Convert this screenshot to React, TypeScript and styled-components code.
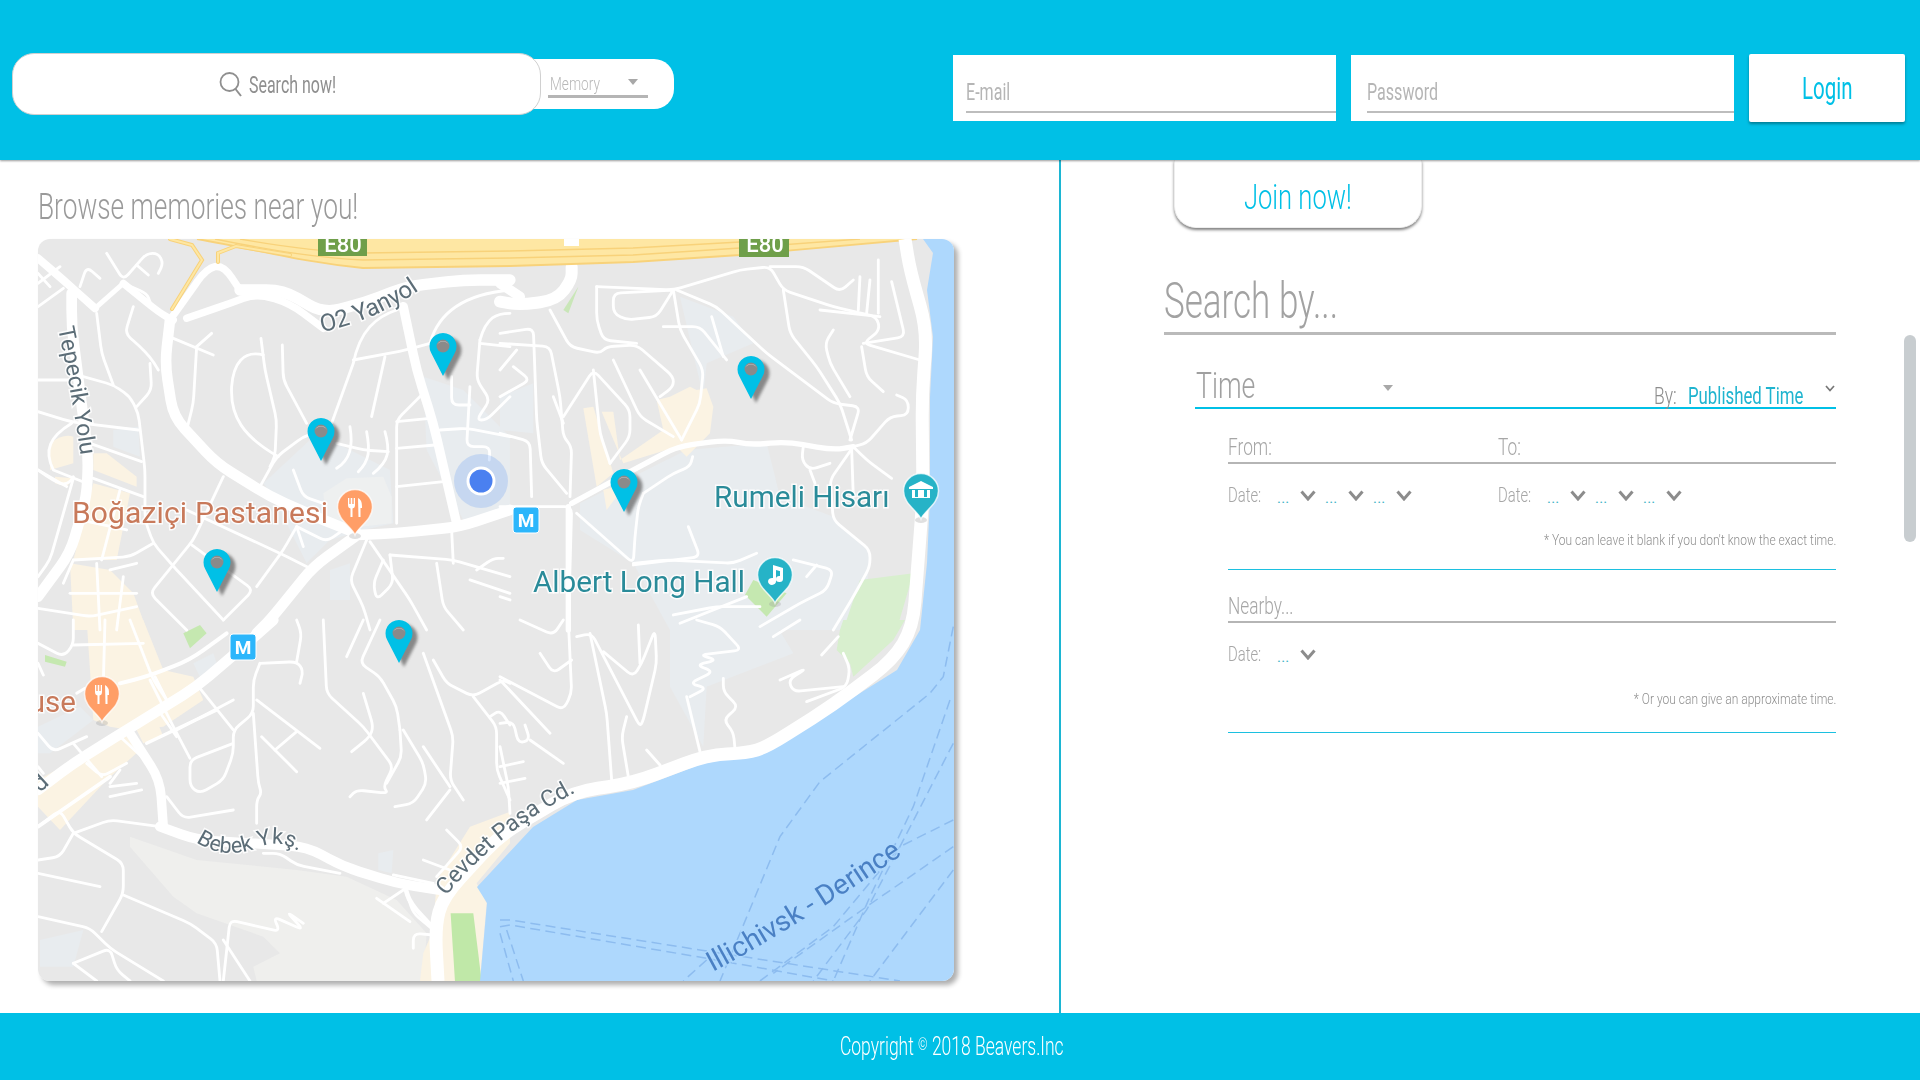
import React from 'react';
import styled, { createGlobalStyle, css } from 'styled-components';

const CYAN = '#00c0e6';

const Global = createGlobalStyle`
  html, body { margin: 0; padding: 0; background: #fff; overflow: hidden; }
  body { font-family: Roboto, "Open Sans", sans-serif; font-weight: 300; }
`;

const squeeze = (k: number, origin = 'left') => css`
  display: inline-block;
  white-space: nowrap;
  transform: scaleX(${k});
  transform-origin: ${origin} center;
`;

const Page = styled.div`
  width: 1920px;
  height: 1080px;
  display: flex;
  flex-direction: column;
  position: relative;
  overflow: hidden;
`;

/* ---------- header ---------- */
const Header = styled.header`
  height: 160px;
  flex: none;
  background: ${CYAN};
  box-shadow: 0 1px 2px rgba(0, 0, 0, 0.4);
  position: relative;
  z-index: 3;
  display: flex;
  align-items: flex-start;
  padding: 0 15px 0 12px;
`;
const SearchBox = styled.div`
  width: 529px;
  height: 62px;
  margin-top: 53px;
  box-sizing: border-box;
  background: #fff;
  border: 1px solid #d0d0d0;
  border-radius: 22px;
  position: relative;
  z-index: 1;
  display: flex;
  align-items: center;
  justify-content: center;
  gap: 5px;
  padding-right: 25px;
  color: #8c8c8c;
`;
const SearchText = styled.span`
  ${squeeze(0.665)}
  width: 62px;
  margin-top: 2px;
  font-size: 24px;
  font-weight: 400;
  color: #8f8f8f;
`;
const TypePill = styled.div`
  width: 140px;
  height: 50px;
  margin: 59px 0 0 -7px;
  background: #fff;
  border-radius: 0 20px 20px 0;
  padding: 0 0 0 14px;
  box-sizing: border-box;
`;
const TypeSelect = styled.div`
  width: 100px;
  height: 39px;
  border-bottom: 3px solid #b5b5b5;
  display: flex;
  align-items: flex-end;
  justify-content: space-between;
  padding: 0 10px 0 2px;
  box-sizing: border-box;
  position: relative;
`;
const TypeText = styled.span`
  ${squeeze(0.72)}
  font-size: 19px;
  color: #b8b8b8;
  width: 40px;
`;
const Caret = styled.i<{ $top: number; $left?: number }>`
  position: absolute;
  ${p => (p.$left !== undefined ? `left: ${p.$left}px;` : 'right: 10px;')}
  top: ${p => p.$top}px;
  width: 0;
  height: 0;
  border-left: 5px solid transparent;
  border-right: 5px solid transparent;
  border-top: 6px solid #a8a8a8;
`;
const LoginArea = styled.div`
  margin-left: auto;
  display: flex;
  gap: 15px;
  align-items: flex-start;
  margin-top: 54px;
`;
const Field = styled.div<{ $pad: number }>`
  width: 383px;
  height: 66px;
  margin-top: 1px;
  background: #fff;
  padding-left: ${p => p.$pad}px;
  box-sizing: border-box;
`;
const FieldInner = styled.div`
  height: 58px;
  border-bottom: 2px solid #bdbdbd;
  box-sizing: border-box;
  display: flex;
  align-items: flex-end;
  padding: 0 0 5px 0;
`;
const FieldText = styled.span`
  ${squeeze(0.67)}
  font-size: 24px;
  color: #b5b5b5;
  font-weight: 400;
`;
const LoginButton = styled.button`
  width: 156px;
  height: 68px;
  border: 0;
  background: #fff;
  border-radius: 2px;
  box-shadow: 0 2px 3px rgba(0, 0, 0, 0.35);
  font: 400 31px Roboto, sans-serif;
  color: ${CYAN};
  padding: 0;
  span { ${squeeze(0.66, 'center')} }
`;

/* ---------- main ---------- */
const Main = styled.main`
  flex: 1;
  display: flex;
  min-height: 0;
`;
const LeftPanel = styled.section`
  width: 1059px;
  flex: none;
  padding: 0 0 0 38px;
  box-sizing: border-box;
`;
const Divider = styled.div`
  width: 2px;
  flex: none;
  background: #1cb6d3;
`;
const Browse = styled.h2`
  margin: 0;
  height: 79px;
  padding-top: 25px;
  box-sizing: border-box;
  font-size: 37px;
  line-height: 44px;
  font-weight: 300;
  color: #9a9a9a;
  span { ${squeeze(0.71)} }
`;
const MapFrame = styled.div`
  width: 916px;
  height: 742px;
  border-radius: 12px;
  overflow: hidden;
  box-shadow: 4px 4px 5px rgba(0, 0, 0, 0.32);
  svg { display: block; filter: blur(0.45px); }
`;
const RightPanel = styled.section`
  flex: 1;
  padding: 0 84px 0 103px;
  box-sizing: border-box;
  position: relative;
`;
const JoinButton = styled.button`
  display: block;
  width: 248px;
  height: 68px;
  margin-left: 10px;
  border: 1px solid #eee;
  border-top: 0;
  background: #fff;
  border-radius: 0 0 22px 22px;
  box-shadow: 0 2px 3px rgba(0, 0, 0, 0.5);
  color: ${CYAN};
  font: 300 35px Roboto, sans-serif;
  padding: 8px 0 0;
  span { ${squeeze(0.73, 'center')} }
`;
const SearchBy = styled.h1`
  margin: 0;
  height: 107px;
  box-sizing: border-box;
  border-bottom: 3px solid #bababa;
  display: flex;
  align-items: flex-end;
  font-size: 50px;
  line-height: 60px;
  font-weight: 300;
  color: #a2a2a2;
  padding-bottom: 1px;
  span { ${squeeze(0.7)} }
`;
const TimeHead = styled.div`
  margin-left: 31px;
  height: 74px;
  box-sizing: border-box;
  border-bottom: 2px solid ${CYAN};
  position: relative;
  display: flex;
  align-items: flex-start;
`;
const TimeLabel = styled.span`
  ${squeeze(0.72)}
  font-size: 37px;
  line-height: 44px;
  margin: 29px 0 0 1px;
  color: #a0a0a0;
`;
const SortBy = styled.div`
  position: absolute;
  left: 459px;
  top: 47px;
  display: flex;
  align-items: center;
  height: 28px;
`;
const ByLabel = styled.span`
  ${squeeze(0.76)}
  font-size: 23px;
  width: 34px;
  color: #8c8c8c;
`;
const ByValue = styled.span`
  ${squeeze(0.7)}
  font-size: 24px;
  font-weight: 400;
  color: #1fb4cf;
`;
const SortChevron = styled.svg`
  position: absolute;
  right: 1px;
  top: 50px;
`;
const Sub = styled.div`
  margin-left: 64px;
`;
const TwoCols = styled.div`
  display: grid;
  grid-template-columns: 270px 1fr;
`;
const SubHead = styled.div<{ $h: number }>`
  height: ${p => p.$h}px;
  box-sizing: border-box;
  border-bottom: 2px solid #b5b5b5;
  display: flex;
  align-items: flex-end;
  padding-bottom: 0;
  font-size: 24px;
  line-height: 30px;
  color: #a6a6a6;
  span { ${squeeze(0.72)} }
`;
const DateRow = styled.div`
  height: 62px;
  display: flex;
  align-items: center;
`;
const DateLabel = styled.span`
  width: 49px;
  font-size: 20px;
  color: #a6a6a6;
  b { font-weight: 300; ${squeeze(0.74)} }
`;
const Stepper = styled.span`
  width: 48px;
  display: flex;
  align-items: center;
  gap: 12px;
`;
const Dots = styled.span`
  width: 11px;
  font-size: 15px;
  font-weight: 400;
  color: #3db2c6;
  margin-top: 6px;
  letter-spacing: 0.2px;
  line-height: 1;
`;
const Note = styled.p<{ $h: number }>`
  margin: 0;
  height: ${p => p.$h}px;
  box-sizing: border-box;
  border-bottom: 1.5px solid #1cc0e0;
  text-align: right;
  line-height: 28px;
  font-size: 15.5px;
  font-weight: 300;
  color: #8f8f8f;
  span { ${squeeze(0.775, 'right')} }
`;
const Thumb = styled.div`
  position: absolute;
  right: 4px;
  top: 175px;
  width: 12px;
  height: 207px;
  border-radius: 6px;
  background: #c8cdd0;
`;
const Footer = styled.footer`
  height: 67px;
  flex: none;
  background: ${CYAN};
  display: flex;
  align-items: center;
  justify-content: center;
  padding-right: 17px;
  color: #fff;
  font-size: 25px;
  font-weight: 300;
  span { ${squeeze(0.7, 'center')} }
  sup { font-size: 17px; vertical-align: 5px; line-height: 0; }
`;

/* ---------- map ---------- */
const MapText = styled.text<{ $c: string; $s: number; $w?: number }>`
  font-family: Roboto, sans-serif;
  font-size: ${p => p.$s}px;
  font-weight: ${p => p.$w ?? 400};
  fill: ${p => p.$c};
  stroke: rgba(255, 255, 255, 0.85);
  stroke-width: 3px;
  paint-order: stroke;
`;

/* round the corners of a polyline, as the streets of the map have them */
const rounded = (d: string, r: number) => {
  if (/[CQA]/.test(d)) return d;
  const pts = d.replace(/[MLZ]/g, ' ').trim().split(/\s+/).map(s => s.split(',').map(Number));
  if (pts.length < 3) return d;
  let out = `M${pts[0][0]},${pts[0][1]}`;
  for (let i = 1; i < pts.length - 1; i++) {
    const [ax, ay] = pts[i - 1];
    const [bx, by] = pts[i];
    const [cx, cy] = pts[i + 1];
    const la = Math.hypot(ax - bx, ay - by);
    const lc = Math.hypot(cx - bx, cy - by);
    const ra = Math.min(r, la / 2);
    const rc = Math.min(r, lc / 2);
    out += ` L${bx + ((ax - bx) * ra) / la},${by + ((ay - by) * ra) / la}`;
    out += ` Q${bx},${by} ${bx + ((cx - bx) * rc) / lc},${by + ((cy - by) * rc) / lc}`;
  }
  const e = pts[pts.length - 1];
  return out + ` L${e[0]},${e[1]}`;
};

const BEIGE = '#fbf3e3';
const CAMPUS = '#e8ecef';

const Z4F: [string, string][] = [
  [CAMPUS, 'M700,760 L850,620 L920,640 L1080,720 L1090,880 L1000,900 L900,930 L830,1000 L730,800Z'],
  ['#eef0f0', 'M880,790 L950,745 L1060,740 L1085,800 L1085,880 L990,890 L890,880Z'],
  [CAMPUS, 'M1180,440 L1300,480 L1440,620 L1440,840 L1300,870 L1190,660Z'],
  [CAMPUS, 'M250,600 L325,590 L330,680 L250,650Z'],
  [CAMPUS, 'M900,1020 L960,1000 L960,1110 L900,1110Z'],
  [BEIGE, 'M60,640 Q100,610 130,620 L130,700 L60,720Z'],
  [BEIGE, 'M190,670 L230,670 L320,740 L320,770 L190,720Z'],
  [BEIGE, 'M75,740 L130,745 L110,770 L75,760Z'],
  [BEIGE, 'M190,760 L300,790 L260,990 L130,990Z'],
  [BEIGE, 'M120,1000 L240,1020 L310,1090 L350,1200 L130,1200Z'],
];
const Z4T = [
  'M230,70 L280,150 L350,70 L385,70 L400,100 L385,130', 'M150,170 L170,110 L210,145', 'M320,105 L355,135', 'M280,160 L350,190 L360,215',
  'M310,230 L285,310 L330,350 L360,380 L385,420', 'M360,400 L365,480 L320,530', 'M200,250 L215,370 L250,465', 'M125,430 L250,465 L300,500 L325,550 L345,720 L345,870 L370,940 L440,1020 L580,1170',
  'M24,450 L120,450', 'M24,545 L120,575 L325,600', 'M180,640 L335,695', 'M24,720 L110,770', 'M125,580 C60,620 40,660 70,720 L170,760',
  'M430,325 L550,375', 'M500,350 L490,520 L470,600', 'M545,310 L500,350', 'M693,325 L705,420 L740,570 L735,680 L720,710',
  'M700,375 C640,360 610,400 605,470 C600,560 640,620 745,680', 'M757,345 L760,450 L830,580', 'M970,390 L1130,360 L1200,340',
  'M1100,240 C1040,260 990,300 970,400 L905,580', 'M1065,380 L1025,560', 'M1200,340 C1230,230 1330,190 1440,180', 'M1350,330 C1370,260 1400,250 1440,250',
  'M1350,340 L1440,350', 'M1350,330 L1340,450 L1380,510 L1340,570 L1370,570 L1440,500', 'M1320,470 L1310,650 L1380,650 L1378,690', 'M1265,440 L1265,525 L1320,525',
  'M1180,490 L1100,570 L1100,880', 'M1100,575 L1200,565', 'M1100,655 L1215,645', 'M1100,770 L1240,755', 'M1230,600 L1310,595 L1440,620',
  'M910,590 L820,620 L740,680 L690,770', 'M920,640 L1000,660 L1075,665', 'M960,590 C970,650 960,690 920,715', 'M1010,605 C1020,660 1020,690 985,725', 'M1065,605 C1080,660 1080,690 1030,730',
  'M580,740 L490,930 L360,1090 L470,1200', 'M470,840 L750,970 L850,1020', 'M485,945 L670,1080 L580,1170', 'M790,720 L820,800 L880,820',
  'M800,890 L760,960 L680,1070', 'M800,890 L820,950', 'M800,890 L890,935 L940,900', 'M370,940 L300,980 L130,990', 'M130,990 L100,1060',
  'M1020,935 L1140,1110 L1190,1200', 'M1010,930 L960,1050 L1000,1130 L1020,1200', 'M1080,975 L1270,990 L1440,1040', 'M1265,900 L1270,1000',
  'M1220,1000 L1240,1130 L1300,1200', 'M1320,1050 L1440,1090', 'M1340,1020 L1390,985 L1420,985', 'M1060,990 L1030,1060 L1040,1110 L1090,1060 L1080,975', 'M24,1135 L180,1160 L320,1130', 'M200,1000 L210,1200',
  'M24,160 L90,110', 'M24,230 L100,175', 'M24,130 L60,170', 'M24,720 C80,760 110,780 130,740', 'M130,745 L60,990 L24,1040',
  'M190,745 L340,800', 'M270,780 L215,990', 'M150,870 L290,900', 'M320,1090 L120,1090', 'M280,1040 L260,1200', 'M240,1020 L320,1000',
];
const Z4H: [string, number][] = [
  ['M24,85 L100,150 L195,235', 24], ['M195,235 L280,160', 15], ['M280,160 L390,250 L430,270', 22],
  ['M420,270 L470,200 L530,115 L580,105 L630,180', 22], ['M470,265 L600,220 L680,190 L780,220 L880,295', 22],
  ['M630,180 L760,180 L880,250 L1000,220 L1130,170 L1300,150 L1440,150', 34], ['M420,270 L405,400 L430,560 L560,700 L720,800 L880,870 L980,910', 32],
  ['M980,915 L1100,910 L1290,890 L1440,840', 32], ['M1120,230 L1160,420 L1210,580 L1280,880', 28], ['M975,920 L850,1010 L720,1170 L680,1210', 32],
  ['M125,190 L125,290 L175,680 L170,800 L120,970 L24,1100', 32],
];
const Z5F: [string, string][] = [
  [CAMPUS, 'M540,200 L700,260 L760,340 L620,400 L610,500Z'],
  [CAMPUS, 'M240,820 L420,730 L560,660 L800,640 L840,800 L1000,860 L1110,970 L1090,1200 L510,1200 L400,1000 L240,900Z'],
  [CAMPUS, 'M0,500 L100,460 L100,610 L0,600Z'],
  [BEIGE, 'M250,535 L280,530 L340,730 L290,770Z'],
  [BEIGE, 'M305,545 L340,545 L360,690 L490,600 L470,510 L510,500 L570,470 L590,480 L620,475 L640,530 L630,610 L560,680 L530,650 L370,700Z'],
  [BEIGE, 'M310,780 L380,760 L320,840Z'],
  ['#d8efce', 'M1030,1200 L1080,1050 L1240,1030 L1190,1200Z'],
  ['#c5e8b0', 'M735,1095 L760,1050 L860,1090 L800,1160Z'],
  ['#c9e6b8', 'M190,240 L235,170 L205,250Z'],
];
const Z5T = [
  'M150,240 L210,350 L300,370 L320,350 L410,345 L520,440 L520,470 L480,500', 'M290,170 L290,270 L310,330 L410,340', 'M290,170 L520,180 L720,120 L810,110 L850,180 L1000,230 L1130,260 L1140,300 L1090,340 L1260,390',
  'M810,110 L910,110 L1020,185 L1060,150', 'M520,180 L340,190 L340,250 L380,270 L470,260 L520,180', 'M520,180 L540,300 L610,420 L600,520 L545,630', 'M530,180 L650,230 L800,370 L1000,520 L1080,530 L1050,630',
  'M490,290 L600,290 L680,390', 'M635,260 L670,380', 'M850,180 L870,310 L950,410 L1020,520 L1055,630', 'M960,240 L1140,260', 'M1080,140 L1075,240', 'M1110,150 L1100,250', 'M1135,90 L1135,250',
  'M1175,155 L1215,320 L1090,340', 'M1000,300 L975,340 L990,400 L1050,500', 'M1085,350 L1100,440 L1150,485', 'M1190,495 L1225,510 L1225,555 L1170,560 L1100,640 L1060,650', 'M1060,650 L1100,690 L1175,745',
  'M1060,650 L990,750 L1000,870 L1110,960 L1110,1010 L1060,1100 L1000,1200', 'M1055,655 L1060,800', 'M0,830 L215,830 L205,1200', 'M0,310 L100,295 L110,570 L125,700 L200,790',
  'M0,340 L150,350 L180,500 L190,620 L215,650 L210,800', 'M50,360 L0,420', 'M40,410 L90,450 L0,500', 'M160,500 L190,580', 'M190,560 L280,420 L390,540 L390,620 L330,700', 'M280,420 L300,610 L330,700',
  'M340,390 L420,560 L520,620', 'M420,420 L545,630', 'M0,610 L90,635 L95,800', 'M230,850 L400,1000 L405,920 L415,830 L430,790', 'M430,790 L520,730 L570,710 L578,680', 'M565,890 L600,980 L400,1005',
  'M400,1000 L500,990 L700,1000 L770,970', 'M880,990 L1000,1020 L980,1080 L900,1120 L780,1190', 'M520,1155 L650,1130 L780,1130', 'M910,650 L905,690 L930,720 L990,700', 'M930,720 L945,760',
  'M0,1100 L30,1110', 'M740,1100 L540,1180', 'M920,1040 L950,1005',
];
const Z5H: [string, number][] = [
  ['M215,110 L215,150 L170,210 L60,225 L0,215', 36], ['M0,160 L60,200', 30],
  ['M215,820 L400,720 L530,650 L680,630 L750,645 L860,635 L1000,660 L1060,650', 16], ['M205,830 L205,1200', 16],
];
const Z6F: [string, string][] = [
  [BEIGE, 'M170,0 L340,0 L400,150 L490,170 L520,240 L400,320 L300,330 L240,320 L190,300 L180,150Z'],
  [BEIGE, 'M24,480 L280,340 L330,390 L230,480 L90,630 L24,560Z'],
  [BEIGE, 'M320,330 L380,300 L400,350 L340,370Z'],
  [CAMPUS, 'M24,320 L150,260 L190,300 L60,400 L24,400Z'],
  [CAMPUS, 'M490,130 L550,100 L560,130 L510,170Z'],
  [CAMPUS, 'M30,960 L160,930 L130,1040 L30,1040Z'],
  [CAMPUS, 'M1045,700 L1090,690 L1085,760 L1045,750Z'],
  ['#efefed', 'M300,650 L500,720 L800,750 L950,770 L1100,840 L1190,940 L1180,1083 L680,1083 L670,1040 L750,1000 L700,950 L500,880 L430,830 L300,680Z'],
  [BEIGE, 'M1220,780 L1320,620 L1440,575 L1440,670 L1340,790 L1370,850 L1350,1083 L1170,1083 L1180,1000 L1210,930Z'],
  ['#c5e8b0', 'M460,40 L510,15 L530,40 L480,85Z'],
  ['#c5e8b0', 'M45,105 L110,125 L105,140 L45,125Z'],
  ['#c0e8a8', 'M1262,880 L1330,880 L1355,1083 L1275,1083Z'],
];
const Z6T = [
  'M130,0 L130,75 L100,110 L24,70', 'M130,75 L340,70', 'M225,0 L220,190', 'M300,0 L370,180 L410,240', 'M360,180 L430,320 L480,415', 'M690,130 L800,125 L820,150 L810,190',
  'M800,125 L815,40 L800,0', 'M690,130 L670,180 L670,280 L610,330 L610,400 L580,480 L510,520 L480,500 L480,420 L610,370', 'M680,240 L870,385', 'M695,350 L800,455', 'M735,390 L800,335', 'M670,280 L685,490 L695,520 L680,540 L680,610',
  'M510,205 L610,330', 'M440,330 L610,240', 'M410,530 L460,595 L610,570', 'M240,500 L320,490', 'M240,530 L335,510', 'M24,620 L90,570 L130,640 L280,730 L280,820 L215,935', 'M130,640 L240,600 L390,620', 'M24,720 L90,710 L130,640',
  'M24,760 L210,800', 'M280,825 L480,910 L560,970 L570,1083', 'M24,890 L180,925 L240,985 L400,1083', 'M130,1030 L240,985 L260,1050 L300,1083', 'M130,1030 L200,1083', 'M580,1083 L600,900 L750,935 L730,890 L820,930 L770,875 L820,910', 'M580,960 L660,1083',
  'M880,0 L890,220 L1000,320 L1090,440 L1060,500 L1075,520 L980,510 L960,530', 'M1000,220 L1030,320 L1020,350 L965,395', 'M1180,100 L1270,350 L1260,480 L1300,540', 'M1110,330 L1115,410 L1070,490', 'M1120,330 L1180,430 L1190,490 L1150,550 L1095,560', 'M1180,380 L1260,500',
  'M1260,510 L1190,600', 'M1210,120 L1250,190 L1330,230 L1420,180 L1440,190', 'M1330,230 L1400,320 L1400,450 L1440,540', 'M1380,290 L1410,270 L1440,315', 'M1050,0 L990,130 L1050,170 L1100,260 L1110,330', 'M1000,0 L950,110', 'M1250,630 L1300,680 L1220,770', 'M1180,720 L1260,750',
  'M1040,835 L1140,905', 'M1060,850 L1120,810', 'M1130,820 L1150,880 L1210,930', 'M1150,985 L1150,940 L1210,945', 'M1090,765 L1210,790', 'M24,340 L70,395 L170,350', 'M24,440 L40,460', 'M700,700 L750,700 L800,735 L930,760', 'M170,430 L215,470 L290,430',
  'M240,490 L270,450', 'M24,130 L40,165', 'M1400,860 L1440,1000', 'M130,370 L215,470', 'M265,345 L340,415', 'M395,285 L440,350', 'M375,170 L410,240', 'M140,220 L165,205',
];
const Z6H: [string, number][] = [
  ['M730,0 L640,80 L500,200 L290,330 L130,430 L24,510', 32], ['M300,340 L390,480 L400,620', 28], ['M390,620 L500,660 L830,680 L940,740 L1100,790 L1230,810', 30],
  ['M1125,800 L1140,850 L1215,930', 14], ['M270,190 L350,170 L480,120 L590,40', 12], ['M350,370 L560,270', 10], ['M24,620 L240,470', 11],
];
const Z7F: [string, string][] = [
  ['#d8efce', 'M1020,30 L1030,0 L1215,0 L1180,60 L1060,170 L1050,130 L1010,90Z'],
  [CAMPUS, 'M510,0 L820,0 L880,100 L750,150 L620,200 L610,380 L560,290 L510,200Z'],
];
const Z7T = [
  'M205,0 L215,220 L190,270 L0,170', 'M0,180 L150,340', 'M120,100 L160,160 L215,120', 'M270,40 L320,280 L335,480', 'M230,50 L275,40 L420,320 L430,300 L470,130 L465,30 L425,130 L400,170 L310,95', 'M415,15 L420,130', 'M380,290 L365,350 L385,470',
  'M440,390 L480,435', 'M0,310 L40,305 L55,370 L90,360 L75,315', 'M90,360 L190,430', 'M0,440 L70,425', 'M0,490 L75,475', 'M0,380 L25,500 L30,580', 'M560,230 L600,395', 'M570,230 L620,205 L570,190 L640,155 L590,135 L650,120 L600,105 L725,90 L660,20 L590,0',
  'M670,175 L670,215 L715,260 L670,300 L700,335 L705,385', 'M1030,100 L1050,145 L1040,200 L920,245', 'M1030,200 L880,215 L865,180 L920,145 L840,180', 'M1015,50 L965,105', 'M820,50 L900,0', 'M60,0 L160,45 L190,0',
];
const LANES = [
  'M1360,20 L1330,170 L1290,220 L960,485 L840,650 L720,940 L660,1083', 'M1350,240 L1240,560 L1110,830 L1000,1083', 'M1360,370 L1200,680 L1100,870 L940,1083',
  'M1360,600 L1200,680 L1000,920 L780,1083', 'M1360,680 L1100,860 L820,1060', 'M1360,750 L1110,1083', 'M620,1020 L550,1083',
  'M0,900 L30,900 L600,990 L1200,1083', 'M0,920 L30,915 L620,1015 L1000,1083', 'M0,940 L40,1083', 'M20,930 L70,1083',
];
const WATER = 'M923,239 L933,253 L927,290 L933,337 L930,397 L930,497 L927,563 L920,630 L897,670 L833,710 L767,750 L707,762 L633,790 L577,800 L533,827 L477,887 L487,903 L480,981 L954,981 L954,239Z';
const COAST = 'M905,239 L910,270 L927,330 L922,397 L923,497 L913,627 L893,660 L833,705 L767,747 L747,753 L707,755 L633,783 L573,792 L500,835 L443,897 L435,927 L438,981';

const Crop = ({ x, y, fills, thin, heavy, layer }: {
  x: number; y: number; fills: [string, string][]; thin: string[]; heavy: [string, number][]; layer: 'fill' | 'thin' | 'heavy';
}) => (
  <g transform={`translate(${x},${y}) scale(0.3333)`} fill="none" stroke="#fff" strokeLinejoin="round" strokeLinecap="round">
    {layer === 'fill' && fills.map(([c, d], i) => <path key={i} d={d} fill={c} stroke="none" />)}
    {layer === 'thin' && thin.map((d, i) => <path key={i} d={rounded(d, 22)} strokeWidth={8.5} />)}
    {layer === 'heavy' && heavy.map(([d, w], i) => <path key={i} d={rounded(d, 50)} strokeWidth={w} />)}
  </g>
);

const CROPS = [
  { x: 30, y: 230, fills: Z4F, thin: Z4T, heavy: Z4H },
  { x: 500, y: 230, fills: Z5F, thin: Z5T, heavy: Z5H },
  { x: 30, y: 620, fills: Z6F, thin: Z6T, heavy: Z6H },
  { x: 500, y: 620, fills: Z7F, thin: Z7T, heavy: [] as [string, number][] },
];

const Pin = ({ x, y }: { x: number; y: number }) => (
  <g transform={`translate(${x},${y})`}>
    <path d="M0,0 L-11.8,-23 A13.5,13.5 0 1 1 11.8,-23Z" fill="#555" opacity="0.65" transform="translate(5,4)" filter="url(#soft)" />
    <path d="M0,0 L-11.8,-23 A13.5,13.5 0 1 1 11.8,-23Z" fill="#00c0e6" />
    <circle cx="0" cy="-30" r="6.5" fill="#8a8a8a" />
    <path d="M-6,-31 A6.5,6.5 0 0 1 6,-31 A7,7 0 0 0 -6,-31Z" fill="#c4c4c4" />
  </g>
);

const Poi = ({ x, y, c, children }: { x: number; y: number; c: string; children: React.ReactNode }) => (
  <g transform={`translate(${x},${y})`}>
    <ellipse cx="0" cy="29" rx="6" ry="3" fill="#999" opacity="0.3" />
    <path d="M0,28 C-3,20 -17.5,13 -17.5,0 A17.5,17.5 0 1 1 17.5,0 C17.5,13 3,20 0,28Z" fill={c} stroke="#fff" strokeWidth="1.5" strokeOpacity="0.75" />
    {children}
  </g>
);

const Fork = () => (
  <path d="M-7,-9 V-2 Q-7,1 -4.5,1.5 V10 H-2.5 V1.5 Q0,1 0,-2 V-9 H-1.3 V-3 H-2.7 V-9 H-4.3 V-3 H-5.7 V-9Z M3,-9 Q7.5,-7 7,1 H5.5 V10 H3.5Z" fill="#fff" />
);

const RoadMap = () => (
  <svg width="916" height="742" viewBox="38 239 916 742">
    <defs>
      <filter id="soft" x="-30%" y="-30%" width="160%" height="160%"><feGaussianBlur stdDeviation="1.4" /></filter>
      <path id="bebek" d="M196,842 Q225,862 262,846 Q287,838 310,860" />
      <path id="cevdet" d="M446,896 Q500,830 580,790" />
      <path id="o2" d="M322,332 Q380,320 434,280" />
      <path id="tepecik" d="M58,328 Q72,395 82,464" />
      <path id="lane" d="M713,972 Q800,925 912,848" />
    </defs>
    <rect x="38" y="239" width="916" height="742" fill="#e8e8e8" />
    {CROPS.map(c => <Crop key={c.x + '' + c.y} {...c} layer="fill" />)}
    {CROPS.map(c => <Crop key={c.x + '' + c.y} {...c} layer="thin" />)}
    {CROPS.map(c => <Crop key={c.x + '' + c.y} {...c} layer="heavy" />)}

    <path d="M197,239 C260,250 300,262 363,268 L510,266 L633,262 L740,255 L917,239Z" fill="#fee7a3" />
    <g fill="none" stroke="#f8d27a" strokeWidth="1.3">
      <path d="M215,239 C280,252 320,258 363,260 L510,258 L633,255 L740,248 L860,239" />
      <path d="M240,239 C290,248 330,252 363,253 L510,251 L633,248 L740,242 L790,239" />
      <path d="M197,239 C260,250 300,262 363,268 L510,266 L633,262 L740,255 L917,239" strokeWidth="1.8" />
    </g>
    <rect x="564" y="239" width="15" height="7" fill="#fff" />
    <g fill="none" strokeLinecap="round">
      <path d="M170,239 L192,245 L202,260 L172,309" stroke="#f8d27a" strokeWidth="4" />
      <path d="M170,239 L192,245 L202,260 L172,309" stroke="#fee7a3" strokeWidth="2" />
      <path d="M218,262 L218,253 L236,246 L290,255" stroke="#f8d27a" strokeWidth="4" />
      <path d="M218,262 L218,253 L236,246 L290,255" stroke="#fee7a3" strokeWidth="2" />
    </g>

    <path d={WATER} fill="#aed8fd" />
    <path d={rounded(COAST, 25)} fill="none" stroke="#fff" strokeWidth="13" strokeLinejoin="round" />
    <g transform="translate(500,620) scale(0.3333)" fill="none" stroke="#8dbcef" strokeWidth="4.5" strokeDasharray="30 16">
      {LANES.map((d, i) => <path key={i} d={d} />)}
    </g>

    <rect x="318" y="236" width="49" height="20" fill="#6f9f4a" />
    <rect x="739" y="236" width="50" height="21" fill="#6f9f4a" />
    <MapText x="343" y="252" textAnchor="middle" $c="#fff" $s={22} $w={500} style={{ stroke: 'none' }}>E80</MapText>
    <MapText x="765" y="252" textAnchor="middle" $c="#fff" $s={22} $w={500} style={{ stroke: 'none' }}>E80</MapText>

    <MapText $c="#5c6d77" $s={24}><textPath href="#o2">O2 Yanyol</textPath></MapText>
    <MapText $c="#5c6d77" $s={23}><textPath href="#tepecik">Tepecik Yolu</textPath></MapText>
    <MapText $c="#5c6d77" $s={22}><textPath href="#bebek">Bebek Ykş.</textPath></MapText>
    <MapText $c="#5c6d77" $s={23}><textPath href="#cevdet">Cevdet Paşa Cd.</textPath></MapText>
    <MapText $c="#4a80c4" $s={28} style={{ stroke: 'rgba(174,216,253,.7)' }}><textPath href="#lane">Illichivsk - Derince</textPath></MapText>
    <MapText x="12" y="712" $c="#c8795a" $s={29.5}>ouse</MapText>
    <MapText $c="#5c6d77" $s={24} transform="translate(40,793) rotate(-42)">d</MapText>
    <MapText x="72" y="523" $c="#c8795a" $s={30} textLength="256">Boğaziçi Pastanesi</MapText>
    <MapText x="714" y="507" $c="#2a8b99" $s={29.7}>Rumeli Hisarı</MapText>
    <MapText x="533" y="592" $c="#2a8b99" $s={29.7}>Albert Long Hall</MapText>

    {[[513, 507], [230, 634]].map(([x, y]) => (
      <g key={x}>
        <rect x={x} y={y} width="26" height="26" rx="3" fill="#2cb6fb" stroke="#fff" strokeWidth="1" />
        <MapText x={x + 13} y={y + 20} textAnchor="middle" $c="#fff" $s={19} $w={700} style={{ stroke: 'none' }}>M</MapText>
      </g>
    ))}

    <Poi x={355} y={507} c="#ff9e67"><Fork /></Poi>
    <Poi x={102} y={694} c="#ff9e67"><Fork /></Poi>
    <Poi x={921} y={491} c="#26b3c7">
      <path d="M0,-10 L12,-4 V-2 H-12 V-4Z M-9,-1 H-6 V6 H-3 V-1 H3 V6 H6 V-1 H9 V7 H-9Z M-2,1 H2 V4 H-2Z" fill="#fff" />
    </Poi>
    <Poi x={775} y={575} c="#26b3c7">
      <path d="M-2,-10 L8,-7 V-3 L1,-5 V6 A4,3.5 0 1 1 -2,3 Z M8,-4 V4 A3.5,3 0 1 1 5,1 V-4Z" fill="#fff" />
    </Poi>

    <circle cx="481" cy="481" r="27" fill="#4285f4" opacity="0.2" />
    <circle cx="481" cy="481" r="14.5" fill="#fff" />
    <circle cx="481" cy="481" r="11.5" fill="#4a80f0" />

    <Pin x={443} y={376} />
    <Pin x={321} y={461} />
    <Pin x={217} y={592} />
    <Pin x={399} y={663} />
    <Pin x={751} y={399} />
    <Pin x={624} y={512} />
  </svg>
);

const Chevron = () => (
  <svg width="16" height="11" viewBox="0 0 16 11"><path d="M1.5,1.5 L8,9 L14.5,1.5" fill="none" stroke="#8c8c8c" strokeWidth="3" /></svg>
);
const Steppers = ({ n }: { n: number }) => (
  <DateRow>
    <DateLabel><b>Date:</b></DateLabel>
    {Array.from({ length: n }).map((_, i) => (
      <Stepper key={i}><Dots>...</Dots><Chevron /></Stepper>
    ))}
  </DateRow>
);

export default function App() {
  return (
    <Page>
      <Global />
      <Header>
        <SearchBox>
          <svg width="26" height="26" viewBox="0 0 26 26" fill="none" stroke="#8f8f8f" strokeWidth="1.8">
            <circle cx="11.5" cy="11" r="9" />
            <path d="M17.5,18 L23,25" strokeWidth="2" />
          </svg>
          <SearchText>Search now!</SearchText>
        </SearchBox>
        <TypePill>
          <TypeSelect>
            <TypeText>Memory</TypeText>
            <Caret $top={20} />
          </TypeSelect>
        </TypePill>
        <LoginArea>
          <Field $pad={13}><FieldInner><FieldText>E-mail</FieldText></FieldInner></Field>
          <Field $pad={16}><FieldInner><FieldText>Password</FieldText></FieldInner></Field>
          <LoginButton><span>Login</span></LoginButton>
        </LoginArea>
      </Header>
      <Main>
        <LeftPanel>
          <Browse><span>Browse memories near you!</span></Browse>
          <MapFrame><RoadMap /></MapFrame>
        </LeftPanel>
        <Divider />
        <RightPanel>
          <JoinButton><span>Join now!</span></JoinButton>
          <SearchBy><span>Search by...</span></SearchBy>
          <TimeHead>
            <TimeLabel>Time</TimeLabel>
            <Caret $left={188} $top={50} />
            <SortBy>
              <ByLabel>By:</ByLabel>
              <ByValue>Published Time</ByValue>
            </SortBy>
            <SortChevron width="10" height="7" viewBox="0 0 10 7"><path d="M1,1 L5,5.5 L9,1" fill="none" stroke="#777" strokeWidth="1.7" /></SortChevron>
          </TimeHead>
          <Sub>
            <SubHead $h={55}>
              <TwoCols>
                <span>From:</span>
                <span>To:</span>
              </TwoCols>
            </SubHead>
            <TwoCols>
              <Steppers n={3} />
              <Steppers n={3} />
            </TwoCols>
            <Note $h={44}><span>* You can leave it blank if you don't know the exact time.</span></Note>
            <SubHead $h={53}><span>Nearby...</span></SubHead>
            <Steppers n={1} />
            <Note $h={48}><span>* Or you can give an approximate time.</span></Note>
          </Sub>
          <Thumb />
        </RightPanel>
      </Main>
      <Footer><span>Copyright <sup>©</sup> 2018 Beavers.Inc</span></Footer>
    </Page>
  );
}
